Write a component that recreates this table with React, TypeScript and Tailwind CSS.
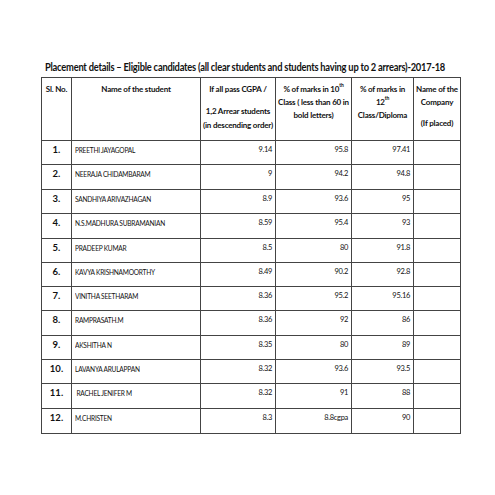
import React from "react";

const rows: { n: string; name: string; cgpa: string; x: string; xii: string; h: string }[] = [
  { n: "1.", name: "PREETHI JAYAGOPAL", cgpa: "9.14", x: "95.8", xii: "97.41", h: "h-[24px]" },
  { n: "2.", name: "NEERAJA CHIDAMBARAM", cgpa: "9", x: "94.2", xii: "94.8", h: "h-[25px]" },
  { n: "3.", name: "SANDHIYA ARIVAZHAGAN", cgpa: "8.9", x: "93.6", xii: "95", h: "h-[24px]" },
  { n: "4.", name: "N.S.MADHURA SUBRAMANIAN", cgpa: "8.59", x: "95.4", xii: "93", h: "h-[25px]" },
  { n: "5.", name: "PRADEEP KUMAR", cgpa: "8.5", x: "80", xii: "91.8", h: "h-[24px]" },
  { n: "6.", name: "KAVYA KRISHNAMOORTHY", cgpa: "8.49", x: "90.2", xii: "92.8", h: "h-[24px]" },
  { n: "7.", name: "VINITHA SEETHARAM", cgpa: "8.36", x: "95.2", xii: "95.16", h: "h-[24px]" },
  { n: "8.", name: "RAMPRASATH.M", cgpa: "8.36", x: "92", xii: "86", h: "h-[25px]" },
  { n: "9.", name: "AKSHITHA N", cgpa: "8.35", x: "80", xii: "89", h: "h-[24px]" },
  { n: "10.", name: "LAVANYA ARULAPPAN", cgpa: "8.32", x: "93.6", xii: "93.5", h: "h-[24px]" },
  { n: "11.", name: "\u00a0RACHEL JENIFER M", cgpa: "8.32", x: "91", xii: "88", h: "h-[25px]" },
  { n: "12.", name: "M.CHRISTEN", cgpa: "8.3", x: "8.8cgpa", xii: "90", h: "h-[25px]" },
];

const grid = "grid grid-cols-[30px_129px_75px_76px_62px_47px]";
const cell = "border-r border-b border-[#444] overflow-hidden";
const num = `${cell} text-right pr-[3px] pt-[4px] text-[7.5px] leading-[10px] tracking-[-0.3px]`;

export default function App() {
  return (
    <div className="w-[495px] h-[495px] bg-white text-[#111] font-['Lato','Liberation_Sans',sans-serif] overflow-hidden">
      <div className="pt-[59px] pl-[45px] text-[12px] leading-[16px] font-bold">
        <div className="origin-left scale-x-[0.778] tracking-[-0.3px] whitespace-nowrap">
          Placement details – Eligible candidates (all clear students and students having up to 2 arrears)-2017-18
        </div>
      </div>
      <div className="ml-[41px] mt-[2px] w-[420px] border-l border-t border-[#444]">
        <div className={`${grid} h-[63px] text-[8px] leading-[13px] font-bold tracking-[-0.2px]`}>
          <div className={`${cell} text-center pt-[5px]`}>Sl. No.</div>
          <div className={`${cell} text-center pt-[5px]`}>Name of the student</div>
          <div className={`${cell} text-center pt-[5px]`}>
            <div>If all pass CGPA /</div>
            <div className="mt-[9px]">1,2 Arrear students</div>
            <div className="mt-[1px]">(in descending order)</div>
          </div>
          <div className={`${cell} text-center pt-[5px]`}>
            <div>
              % of marks in 10<sup className="text-[5px] align-top leading-[8px]">th</sup>
            </div>
            <div>Class ( less than 60 in</div>
            <div>bold letters)</div>
          </div>
          <div className={`${cell} text-center pt-[5px]`}>
            <div>% of marks in</div>
            <div>
              12<sup className="text-[5px] align-top leading-[8px]">th</sup>
            </div>
            <div>Class/Diploma</div>
          </div>
          <div className={`${cell} text-center pt-[5px]`}>
            <div>Name of the</div>
            <div>Company</div>
            <div className="mt-[8px]">(If placed)</div>
          </div>
        </div>
        {rows.map((r) => (
          <div key={r.n} className={`${grid} ${r.h}`}>
            <div className={`${cell} text-center pt-[3px] text-[9.5px] leading-[12px] font-bold`}>{r.n}</div>
            <div className={`${cell} pl-[3px] pt-[5px] text-[7px] leading-[9px]`}>
              <div className="origin-left scale-x-[0.94] tracking-[-0.25px] whitespace-pre">{r.name}</div>
            </div>
            <div className={num}>{r.cgpa}</div>
            <div className={num}>{r.x}</div>
            <div className={num}>{r.xii}</div>
            <div className={cell}></div>
          </div>
        ))}
      </div>
    </div>
  );
}
